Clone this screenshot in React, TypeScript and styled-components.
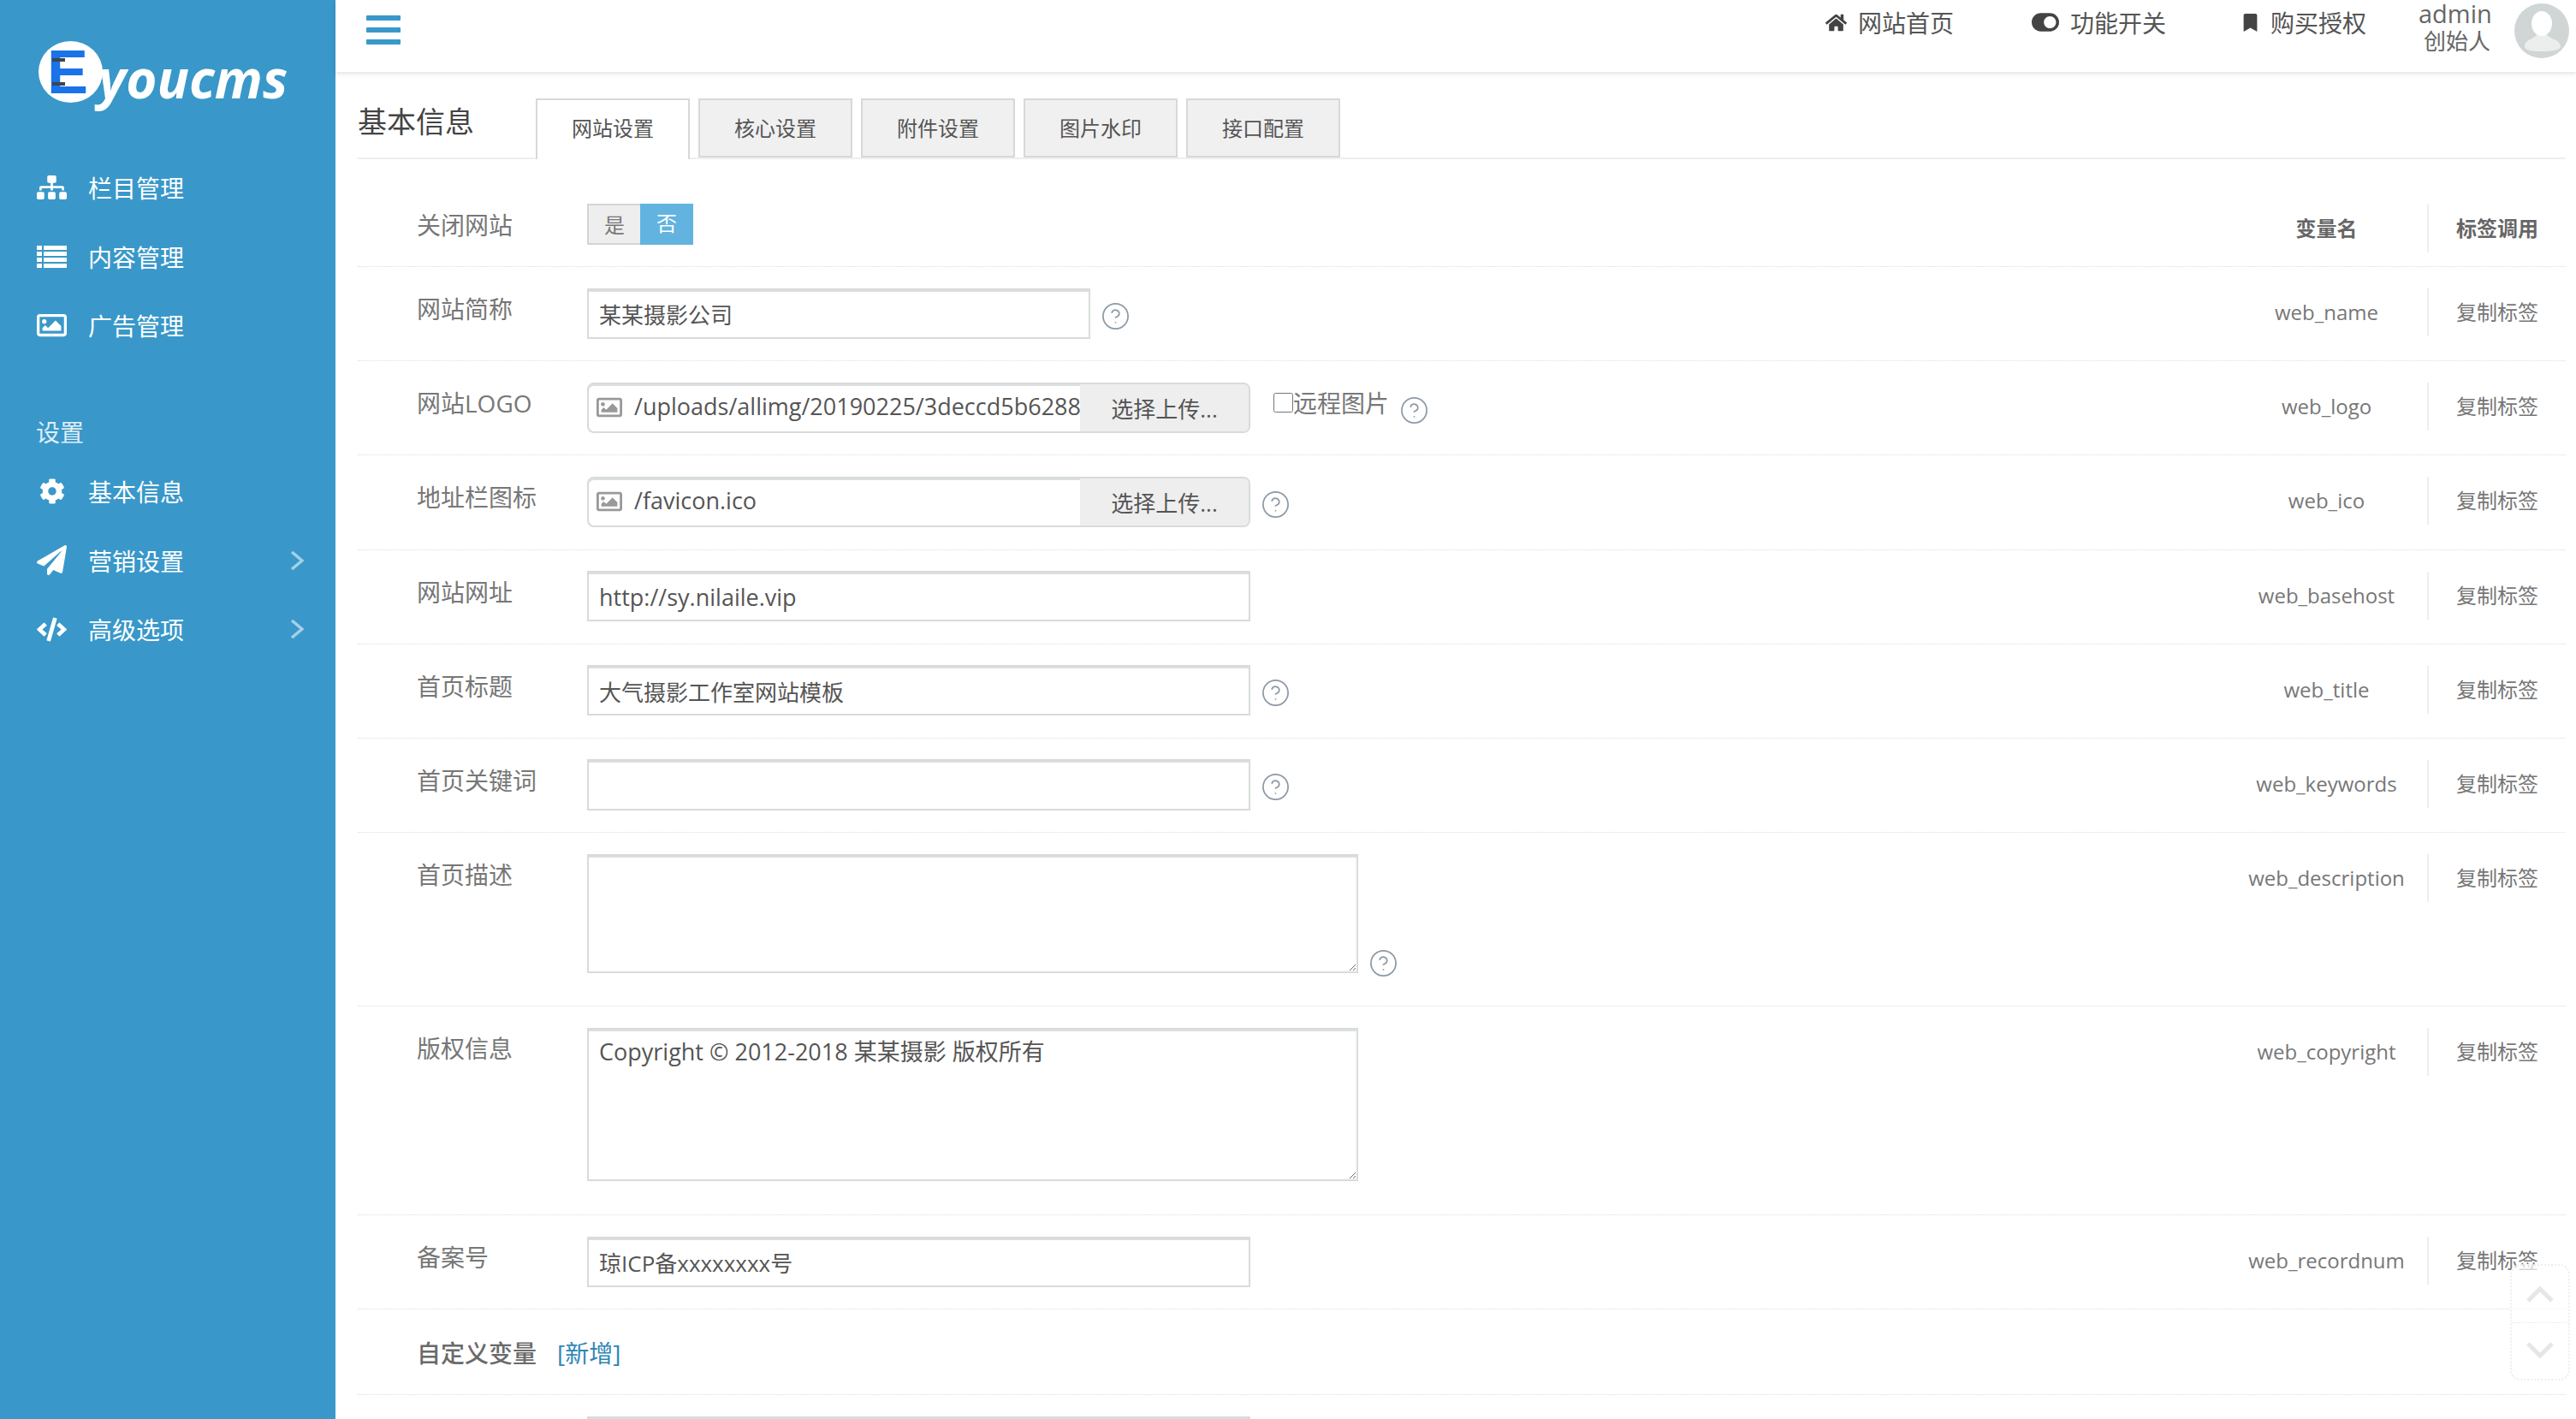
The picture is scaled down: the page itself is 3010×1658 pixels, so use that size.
import React from 'react';
import styled, { createGlobalStyle } from 'styled-components';
import { CircleHelp } from 'lucide-react';
import {
  FaBookmark,
  FaCode,
  FaCog,
  FaHome,
  FaPaperPlane,
  FaRegImage,
  FaSitemap,
  FaToggleOn,
} from 'react-icons/fa';

const FONT = '"Open Sans", "Noto Sans CJK SC", sans-serif';

const GlobalStyle = createGlobalStyle`
  html, body {
    margin: 0;
    height: 100%;
    overflow: hidden;
    background: #fff;
    font-family: ${FONT};
  }
  * {
    box-sizing: border-box;
  }
`;

const Page = styled.div`
  position: relative;
  display: flex;
  height: 1658px;
  overflow: hidden;
`;

const Sidebar = styled.aside`
  width: 392px;
  flex: none;
  background: #3998c9;
  color: #fff;
`;

const Logo = styled.div`
  height: 179px;
  padding: 48px 0 0 45px;
  display: flex;
  align-items: flex-start;
`;

const LogoBadge = styled.div`
  position: relative;
  width: 75px;
  height: 72px;
  flex: none;
  border-radius: 50%;
  background: #fff;
  color: #1a73e8;
  font: bold 72px/72px 'Liberation Sans', sans-serif;
  padding-left: 10px;
  &::before,
  &::after {
    content: '';
    position: absolute;
    left: 16px;
    width: 15px;
    height: 4px;
    background: #3c4650;
  }
  &::before {
    top: 20px;
  }
  &::after {
    top: 48px;
  }
`;

const LogoText = styled.div`
  margin: 3px 0 0 -5px;
  font: italic 700 62px/80px 'Open Sans', sans-serif;
`;

const SideItem = styled.div`
  height: 80.4px;
  padding: 0 37px 0 43px;
  display: flex;
  align-items: center;
  font-size: 28px;
`;

const SideIcon = styled.span`
  width: 35px;
  margin-right: 25px;
  flex: none;
  display: flex;
  align-items: center;
  justify-content: center;
`;

const SideLabel = styled.span`
  flex: 1;
`;

const SideArrow = styled.svg`
  width: 16px;
  height: 22px;
  fill: none;
  stroke: rgba(255, 255, 255, 0.55);
  stroke-width: 3.5;
`;

const SideGroupTitle = styled.div`
  margin: 60px 0 4px;
  padding-left: 42px;
  font-size: 28px;
  line-height: 50px;
  color: rgba(255, 255, 255, 0.85);
`;

const Main = styled.main`
  flex: 1;
  min-width: 0;
`;

const Topbar = styled.header`
  height: 84px;
  padding: 0 8px 0 36px;
  display: flex;
  align-items: flex-start;
  background: #fff;
  box-shadow: 0 2px 5px rgba(0, 0, 0, 0.12);
`;

const Hamburger = styled.div`
  width: 40px;
  margin-top: 18px;
  display: flex;
  flex-direction: column;
  gap: 8px;
`;

const HamburgerBar = styled.span`
  height: 6px;
  border-radius: 1px;
  background: #3998c9;
`;

const TopNav = styled.nav`
  margin-left: auto;
  display: flex;
  align-items: flex-start;
`;

const TopLink = styled.a<{ $gap: number }>`
  height: 52px;
  margin-right: ${(p) => p.$gap}px;
  display: flex;
  align-items: center;
  gap: 13px;
  font-size: 28px;
  color: #555;
  svg {
    color: #444;
  }
`;

const UserName = styled.div`
  width: 84px;
  margin-right: 28px;
  text-align: right;
`;

const UserTitle = styled.div`
  font-size: 29px;
  line-height: 32px;
  color: #666;
`;

const UserRole = styled.div`
  font-size: 26px;
  line-height: 32px;
  color: #666;
`;

const Avatar = styled.svg`
  width: 64px;
  height: 64px;
  margin-top: 4px;
  flex: none;
`;

const Content = styled.div`
  padding: 31px 12px 0 26px;
`;

const TitleBar = styled.div`
  height: 71px;
  display: flex;
  border-bottom: 2px solid #eee;
`;

const PageTitle = styled.h1`
  width: 208px;
  margin: 0;
  font-size: 34px;
  font-weight: 400;
  line-height: 54px;
  color: #444;
`;

const Tabs = styled.div`
  display: flex;
  gap: 10px;
`;

const Tab = styled.div<{ $active?: boolean }>`
  width: 180px;
  height: ${(p) => (p.$active ? 71 : 69)}px;
  border: 2px solid #d8d8d8;
  border-bottom: ${(p) => (p.$active ? 'none' : '2px solid #d8d8d8')};
  background: ${(p) => (p.$active ? '#fff' : '#f0f0f0')};
  color: #555;
  font-size: 24px;
  line-height: 66px;
  text-align: center;
`;

const Rows = styled.div`
  padding-top: 27.5px;
`;

const Row = styled.div<{ $bottom?: number }>`
  display: flex;
  align-items: flex-start;
  padding: 24.5px 0 ${(p) => p.$bottom ?? 25.5}px;
  border-bottom: 1px dotted #ddd;
`;

const Label = styled.label`
  width: 268px;
  margin-top: 0.5px;
  padding-left: 69px;
  flex: none;
  font-size: 28px;
  line-height: 48px;
  white-space: nowrap;
  color: #777;
`;

const Field = styled.div`
  flex: 1;
  min-width: 0;
  display: flex;
  align-items: flex-start;
`;

const VarCell = styled.div`
  width: 237px;
  height: 56px;
  margin-top: 0.5px;
  flex: none;
  border-right: 2px solid #eee;
  font-size: 24px;
  line-height: 56px;
  text-align: center;
  color: #777;
`;

const CopyCell = styled.div`
  width: 160px;
  height: 56px;
  margin-top: 0.5px;
  padding-left: 32px;
  flex: none;
  font-size: 24px;
  line-height: 56px;
  color: #777;
`;

const HeaderCell = styled.span`
  font-weight: 600;
  color: #666;
`;

const Switch = styled.div`
  display: flex;
  height: 48px;
`;

const SwitchOption = styled.div<{ $on?: boolean }>`
  width: 62px;
  border-bottom: ${(p) => (p.$on ? 'none' : '2px solid #d2d5d5')};
  border-top: ${(p) => (p.$on ? 'none' : '2px solid #d2d5d5')};
  border-left: ${(p) => (p.$on ? 'none' : '2px solid #d2d5d5')};
  background: ${(p) => (p.$on ? '#62b3e0' : '#eeeeee')};
  color: ${(p) => (p.$on ? '#fff' : '#777')};
  font-size: 24px;
  line-height: 46px;
  text-align: center;
`;

const TextInput = styled.input<{ $width: number; $size?: number }>`
  width: ${(p) => p.$width}px;
  height: 59.2px;
  flex: none;
  padding: 2px 12px 0;
  border: 2px solid #d8dbdb;
  box-shadow: inset 0 2px 0 #dcdfdf;
  border-radius: 0;
  outline: none;
  font-family: ${FONT};
  font-size: ${(p) => p.$size ?? 26}px;
  color: #555;
`;

const TextArea = styled.textarea<{ $height: number }>`
  display: block;
  width: 901px;
  height: ${(p) => p.$height}px;
  flex: none;
  padding: 8px 12px;
  border: 2px solid #d8dbdb;
  box-shadow: inset 0 2px 0 #dcdfdf;
  border-radius: 0;
  outline: none;
  font-family: ${FONT};
  font-size: 27px;
  line-height: 36px;
  color: #555;
`;

const UploadGroup = styled.div`
  width: 775px;
  height: 59.2px;
  flex: none;
  display: flex;
  align-items: stretch;
  border: 2px solid #d8dbdb;
  box-shadow: inset 0 2px 0 #dcdfdf;
  border-radius: 8px;
  overflow: hidden;
`;

const UploadIcon = styled.span`
  width: 53px;
  flex: none;
  padding-left: 9px;
  display: flex;
  align-items: center;
  color: #999;
  font-size: 30px;
`;

const UploadPath = styled.span`
  flex: 1;
  min-width: 0;
  overflow: hidden;
  white-space: nowrap;
  font-size: 27px;
  line-height: 52px;
  color: #555;
`;

const UploadButton = styled.span`
  width: 197px;
  flex: none;
  background: #eeeeee;
  font-size: 26px;
  line-height: 58px;
  text-align: center;
  color: #555;
`;

const RemoteCheck = styled.label`
  margin: 6px 0 0 27px;
  display: flex;
  align-items: center;
  font-size: 28px;
  line-height: 36px;
  color: #777;
`;

const CheckBox = styled.input`
  width: 23px;
  height: 23px;
  margin: 0;
`;

const Help = styled.span<{ $top?: number }>`
  margin: ${(p) => p.$top ?? 15}px 0 0 12px;
  flex: none;
  display: flex;
  color: #8c99a6;
`;

const CustomRow = styled.div`
  height: 100px;
  padding-left: 69px;
  display: flex;
  align-items: center;
  gap: 24px;
  border-bottom: 1px dotted #ddd;
  font-size: 28px;
  color: #6a6a6a;
  font-weight: 500;
`;

const AddLink = styled.a`
  color: #3085b5;
  font-weight: 400;
`;

const CutInputRow = styled.div`
  padding: 25px 0 0 268px;
`;

const ScrollButtons = styled.div`
  position: absolute;
  left: 2933px;
  top: 1477px;
  width: 70px;
  height: 136px;
  display: flex;
  flex-direction: column;
  border: 2px dotted #eeeeee;
  border-radius: 12px;
  background: rgba(255, 255, 255, 0.7);
`;

const ScrollButton = styled.div<{ $first?: boolean }>`
  flex: 1;
  display: flex;
  align-items: center;
  justify-content: center;
  border-bottom: ${(p) => (p.$first ? '1px dotted #e6e6e6' : 'none')};
  svg {
    width: 34px;
    height: 22px;
    fill: none;
    stroke: #e6e6e6;
    stroke-width: 5;
  }
`;

type Item = { name: string; icon: React.ReactNode; arrow?: boolean };

const ListIcon: React.FC = () => (
  <svg width="35" height="26" viewBox="0 0 35 26" fill="currentColor">
    {[0, 7, 14, 21].map((y) => (
      <React.Fragment key={y}>
        <rect x="0" y={y} width="6" height="5" />
        <rect x="8" y={y} width="27" height="5" />
      </React.Fragment>
    ))}
  </svg>
);

const topItems: Item[] = [
  { name: '栏目管理', icon: <FaSitemap size={36} /> },
  { name: '内容管理', icon: <ListIcon /> },
  { name: '广告管理', icon: <FaRegImage size={36} /> },
];

const settingItems: Item[] = [
  { name: '基本信息', icon: <FaCog size={30} /> },
  { name: '营销设置', icon: <FaPaperPlane size={35} />, arrow: true },
  { name: '高级选项', icon: <FaCode size={35} />, arrow: true },
];

const tabs = ['网站设置', '核心设置', '附件设置', '图片水印', '接口配置'];

const HelpIcon: React.FC<{ top?: number }> = ({ top }) => (
  <Help $top={top}>
    <CircleHelp size={35} strokeWidth={1.2} />
  </Help>
);

const SideRow: React.FC<{ item: Item }> = ({ item }) => (
  <SideItem>
    <SideIcon>{item.icon}</SideIcon>
    <SideLabel>{item.name}</SideLabel>
    {item.arrow && (
      <SideArrow viewBox="0 0 16 22">
        <polyline points="2,1 14,11 2,21" />
      </SideArrow>
    )}
  </SideItem>
);

const RowEnd: React.FC<{ name: string }> = ({ name }) => (
  <>
    <VarCell>{name}</VarCell>
    <CopyCell>复制标签</CopyCell>
  </>
);

const App: React.FC = () => {
  return (
    <Page>
      <GlobalStyle />
      <Sidebar>
        <Logo>
          <LogoBadge>E</LogoBadge>
          <LogoText>youcms</LogoText>
        </Logo>
        {topItems.map((item) => (
          <SideRow key={item.name} item={item} />
        ))}
        <SideGroupTitle>设置</SideGroupTitle>
        {settingItems.map((item) => (
          <SideRow key={item.name} item={item} />
        ))}
      </Sidebar>
      <Main>
        <Topbar>
          <Hamburger>
            <HamburgerBar />
            <HamburgerBar />
            <HamburgerBar />
          </Hamburger>
          <TopNav>
            <TopLink $gap={91}>
              <FaHome size={25} />
              网站首页
            </TopLink>
            <TopLink $gap={88}>
              <FaToggleOn size={32} />
              功能开关
            </TopLink>
            <TopLink $gap={61}>
              <FaBookmark size={21} />
              购买授权
            </TopLink>
            <UserName>
              <UserTitle>admin</UserTitle>
              <UserRole>创始人</UserRole>
            </UserName>
            <Avatar viewBox="0 0 64 64">
              <circle cx="32" cy="32" r="32" fill="#d0d5d6" />
              <path d="M26 36 C25 41 12 42 12 50 C12 54 18 56 32 56 C46 56 54 54 54 50 C54 42 39 41 38 36 Z" fill="#eceeee" />
              <ellipse cx="32" cy="23.5" rx="12" ry="14.5" fill="#fff" />
            </Avatar>
          </TopNav>
        </Topbar>
        <Content>
          <TitleBar>
            <PageTitle>基本信息</PageTitle>
            <Tabs>
              {tabs.map((tab, i) => (
                <Tab key={tab} $active={i === 0}>
                  {tab}
                </Tab>
              ))}
            </Tabs>
          </TitleBar>
          <Rows>
            <Row $bottom={16.5}>
              <Label>关闭网站</Label>
              <Field>
                <Switch>
                  <SwitchOption>是</SwitchOption>
                  <SwitchOption $on>否</SwitchOption>
                </Switch>
              </Field>
              <VarCell>
                <HeaderCell>变量名</HeaderCell>
              </VarCell>
              <CopyCell>
                <HeaderCell>标签调用</HeaderCell>
              </CopyCell>
            </Row>
            <Row>
              <Label>网站简称</Label>
              <Field>
                <TextInput $width={588} readOnly value="某某摄影公司" />
                <HelpIcon />
              </Field>
              <RowEnd name="web_name" />
            </Row>
            <Row>
              <Label>网站LOGO</Label>
              <Field>
                <UploadGroup>
                  <UploadIcon>
                    <FaRegImage />
                  </UploadIcon>
                  <UploadPath>/uploads/allimg/20190225/3deccd5b6288</UploadPath>
                  <UploadButton>选择上传...</UploadButton>
                </UploadGroup>
                <RemoteCheck>
                  <CheckBox type="checkbox" />
                  远程图片
                </RemoteCheck>
                <HelpIcon />
              </Field>
              <RowEnd name="web_logo" />
            </Row>
            <Row>
              <Label>地址栏图标</Label>
              <Field>
                <UploadGroup>
                  <UploadIcon>
                    <FaRegImage />
                  </UploadIcon>
                  <UploadPath>/favicon.ico</UploadPath>
                  <UploadButton>选择上传...</UploadButton>
                </UploadGroup>
                <HelpIcon />
              </Field>
              <RowEnd name="web_ico" />
            </Row>
            <Row>
              <Label>网站网址</Label>
              <Field>
                <TextInput $width={775} $size={27} readOnly value="http://sy.nilaile.vip" />
              </Field>
              <RowEnd name="web_basehost" />
            </Row>
            <Row>
              <Label>首页标题</Label>
              <Field>
                <TextInput $width={775} readOnly value="大气摄影工作室网站模板" />
                <HelpIcon />
              </Field>
              <RowEnd name="web_title" />
            </Row>
            <Row>
              <Label>首页关键词</Label>
              <Field>
                <TextInput $width={775} readOnly value="" />
                <HelpIcon />
              </Field>
              <RowEnd name="web_keywords" />
            </Row>
            <Row $bottom={32.5}>
              <Label>首页描述</Label>
              <Field>
                <TextArea $height={139} readOnly value="" />
                <HelpIcon top={110} />
              </Field>
              <RowEnd name="web_description" />
            </Row>
            <Row $bottom={39.5}>
              <Label>版权信息</Label>
              <Field>
                <TextArea $height={179} readOnly value="Copyright © 2012-2018 某某摄影 版权所有" />
              </Field>
              <RowEnd name="web_copyright" />
            </Row>
            <Row>
              <Label>备案号</Label>
              <Field>
                <TextInput $width={775} readOnly value="琼ICP备xxxxxxxx号" />
              </Field>
              <RowEnd name="web_recordnum" />
            </Row>
            <CustomRow>
              自定义变量
              <AddLink>[新增]</AddLink>
            </CustomRow>
            <CutInputRow>
              <TextInput $width={775} readOnly value="" />
            </CutInputRow>
          </Rows>
        </Content>
      </Main>
      <ScrollButtons>
        <ScrollButton $first>
          <svg viewBox="0 0 34 22">
            <polyline points="3,19 17,5 31,19" />
          </svg>
        </ScrollButton>
        <ScrollButton>
          <svg viewBox="0 0 34 22">
            <polyline points="3,3 17,17 31,3" />
          </svg>
        </ScrollButton>
      </ScrollButtons>
    </Page>
  );
};

export default App;
